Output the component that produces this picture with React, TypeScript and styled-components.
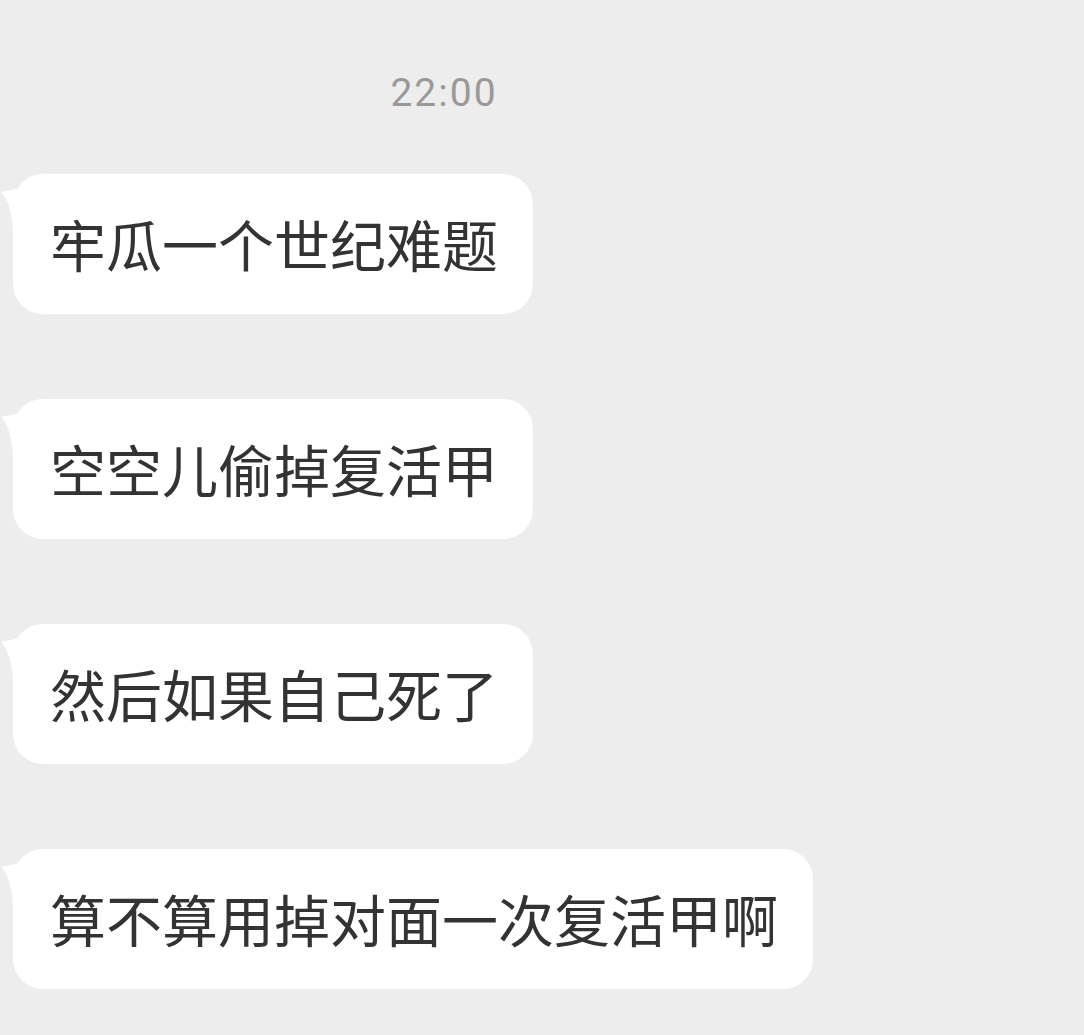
import styled, { createGlobalStyle } from 'styled-components';

const GlobalStyle = createGlobalStyle`
  html, body {
    margin: 0;
    padding: 0;
    background: #ededed;
  }
  body {
    font-family: 'Noto Sans CJK SC', 'Noto Sans', sans-serif;
  }
`;

const Page = styled.div`
  width: 1084px;
  min-height: 1035px;
  background: #ededed;
  display: flex;
  flex-direction: column;
`;

const TimeRow = styled.div`
  width: 888px;
  margin-top: 71px;
  height: 44px;
  line-height: 44px;
  text-align: center;
  font-family: Roboto, 'Noto Sans', sans-serif;
  font-size: 39px;
  letter-spacing: 2px;
  color: #999999;
`;

const MessageList = styled.div`
  display: flex;
  flex-direction: column;
  align-items: flex-start;
  gap: 85px;
  margin-top: 59px;
  padding-left: 13px;
`;

const Bubble = styled.div`
  position: relative;
  box-sizing: border-box;
  height: 140px;
  display: flex;
  align-items: center;
  padding: 0 35px 4px 37px;
  background: #ffffff;
  border-radius: 30px;
  font-size: 56px;
  color: #333333;
  white-space: nowrap;
`;

const Tail = styled.svg`
  position: absolute;
  left: -13px;
  top: 6px;
  width: 20px;
  height: 55px;
`;

const messages = [
  '牢瓜一个世纪难题',
  '空空儿偷掉复活甲',
  '然后如果自己死了',
  '算不算用掉对面一次复活甲啊',
];

function MessageBubble({ text }: { text: string }) {
  return (
    <Bubble>
      <Tail viewBox="0 0 20 55">
        <path d="M1 12 L20 8 L20 50 L13 50 Q11 22 1 12 Z" fill="#ffffff" />
      </Tail>
      {text}
    </Bubble>
  );
}

export default function App() {
  return (
    <Page>
      <GlobalStyle />
      <TimeRow>22:00</TimeRow>
      <MessageList>
        {messages.map((m) => (
          <MessageBubble key={m} text={m} />
        ))}
      </MessageList>
    </Page>
  );
}
